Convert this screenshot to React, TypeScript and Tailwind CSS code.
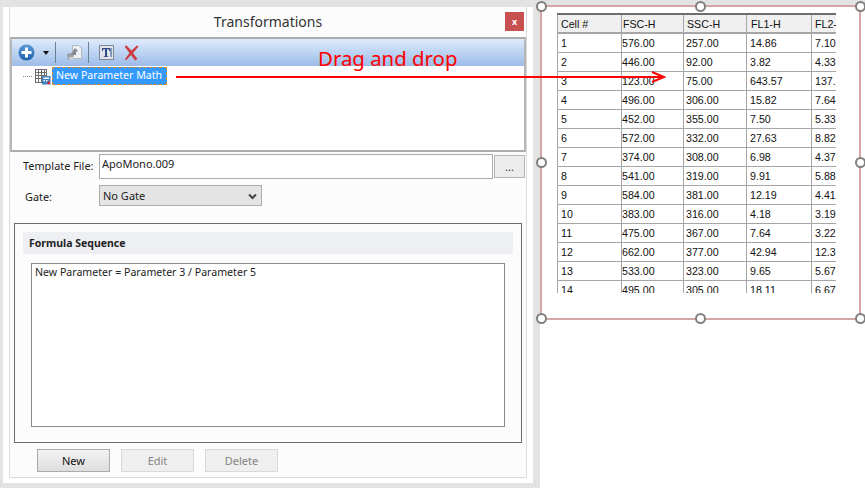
import React from "react";

const ui = { fontFamily: '"Noto Sans", "Open Sans", sans-serif' };
const arial = { fontFamily: '"Liberation Sans", Arial, sans-serif' };

const rows = [
  ["1", "576.00", "257.00", "14.86", "7.10"],
  ["2", "446.00", "92.00", "3.82", "4.33"],
  ["3", "123.00", "75.00", "643.57", "137."],
  ["4", "496.00", "306.00", "15.82", "7.64"],
  ["5", "452.00", "355.00", "7.50", "5.33"],
  ["6", "572.00", "332.00", "27.63", "8.82"],
  ["7", "374.00", "308.00", "6.98", "4.37"],
  ["8", "541.00", "319.00", "9.91", "5.88"],
  ["9", "584.00", "381.00", "12.19", "4.41"],
  ["10", "383.00", "316.00", "4.18", "3.19"],
  ["11", "475.00", "367.00", "7.64", "3.22"],
  ["12", "662.00", "377.00", "42.94", "12.3"],
  ["13", "533.00", "323.00", "9.65", "5.67"],
  ["14", "495.00", "305.00", "18.11", "6.67"],
];

const colClasses = [
  "w-[64px] pl-[3px]",
  "w-[62px] pl-0",
  "w-[63px] pl-[2px]",
  "w-[65px] pl-[3px]",
  "w-[25px] pl-[3px]",
];
const headClasses = [
  "w-[64px] pl-[3px]",
  "w-[62px] pl-[1px]",
  "w-[63px] pl-[3px]",
  "w-[65px] pl-[4px]",
  "w-[25px] pl-[3px]",
];

function Handle({ className }: { className: string }) {
  return (
    <span
      className={`absolute w-[11px] h-[11px] rounded-full bg-white border-2 border-[#808080] ${className}`}
    />
  );
}

function PlusIcon() {
  return (
    <svg width="17" height="17" viewBox="0 0 17 17">
      <defs>
        <linearGradient id="pg" x1="0" y1="0" x2="0" y2="1">
          <stop offset="0" stopColor="#5b9ad6" />
          <stop offset="1" stopColor="#1f62ad" />
        </linearGradient>
      </defs>
      <circle cx="8.5" cy="8.5" r="8" fill="url(#pg)" />
      <rect x="7" y="3.5" width="3" height="10" fill="#fff" />
      <rect x="3.5" y="7" width="10" height="3" fill="#fff" />
    </svg>
  );
}

function ImportIcon() {
  return (
    <svg width="17" height="18" viewBox="0 0 17 18">
      <path d="M6.5 1.5h6l3 3v10h-9z" fill="#eef1f6" stroke="#b4b8bd" />
      <path d="M1 10l4-1 2-1 1 2-1 6H2z" fill="#9a9ea5" />
      <path d="M6 11l1-4 2-3 3 3-2 1v3z" fill="#84898f" />
      <rect x="3" y="13" width="5" height="3" fill="#c9ccd0" />
    </svg>
  );
}

function TextIcon() {
  return (
    <svg width="15" height="15" viewBox="0 0 15 15">
      <rect x="0.5" y="0.5" width="14" height="14" fill="#dfe3ea" stroke="#7f8896" />
      <path d="M3 3h8v3h-1V4.3H8v7h1.2V12H4.8v-.7H6v-7H4V6H3z" fill="#2f4a85" />
      <rect x="11.5" y="3" width="1" height="9" fill="#2f4a85" />
    </svg>
  );
}

function DeleteIcon() {
  return (
    <svg width="15" height="16" viewBox="0 0 15 16">
      <path d="M0.5 1.5L2.5 0.5 7.5 5.5 13 0.5 14.5 1.5 9 8 13.5 14 11 15.5 7 10 2 15.5 1 14 5.5 8z" fill="#cc3c40" />
    </svg>
  );
}

function TableIcon() {
  return (
    <svg width="16" height="16" viewBox="0 0 16 16">
      <rect x="0.5" y="0.5" width="11" height="13" fill="#fff" stroke="#6c6c6c" />
      <path d="M0.5 3.5h11M0.5 6.5h11M0.5 9.5h11M3.5 0.5v13M6.5 0.5v13M9.5 0.5v13" stroke="#6c6c6c" strokeWidth="1" />
      <rect x="7" y="7" width="8.5" height="8.5" fill="#3f83c4" />
      <rect x="8.5" y="8.5" width="5.5" height="1.5" fill="#fff" />
      <rect x="8.5" y="11" width="1.5" height="1.5" fill="#fff" />
      <rect x="11" y="11" width="1.5" height="1.5" fill="#fff" />
      <rect x="12.5" y="12.5" width="2.5" height="2.5" fill="#e02020" />
    </svg>
  );
}

function Button({ label, disabled }: { label: string; disabled?: boolean }) {
  return (
    <button
      className={
        disabled
          ? "w-[73px] h-[23px] pt-[1px] text-[11px] border border-[#d9d9d9] bg-[#efefef] text-[#838383]"
          : "w-[73px] h-[23px] pt-[1px] text-[11px] border border-[#ababab] bg-gradient-to-b from-[#f2f2f2] to-[#dedede] text-[#111]"
      }
    >
      {label}
    </button>
  );
}

export default function App() {
  return (
    <div className="relative w-[865px] h-[488px] overflow-hidden bg-[#e3e3e3] flex text-[#222]" style={ui}>
      {/* Dialog window */}
      <div className="ml-[3px] mt-[7px] w-[530px] h-[476px] bg-white pl-[6px] pr-[6px] pb-[5px] shrink-0">
        <div className="h-full border-x border-b border-[#dcdcdc] bg-[#fcfcfc] flex flex-col">
          <div className="h-[30px] flex items-center shrink-0">
            <div className="w-[37px] shrink-0" />
            <div className="flex-1 text-center text-[14px] text-[#333] leading-none pb-[1px]">Transformations</div>
            <div className="w-[37px] shrink-0 flex pl-[16px] pb-[1px]">
              <div className="w-[19px] h-[19px] bg-[#c75050] text-white text-[9px] font-bold flex items-center justify-center leading-none">
                x
              </div>
            </div>
          </div>

          {/* Toolbar and tree */}
          <div className="h-[115px] border-2 border-[#adadad] border-r-[#b5b5b5] border-l-[#b5b5b5] shrink-0 flex flex-col">
            <div className="h-[27px] shrink-0 bg-gradient-to-b from-[#deebfc] to-[#9dbce8] flex items-center pl-[6px]">
              <PlusIcon />
              <svg width="6" height="4" viewBox="0 0 6 4" className="ml-[8px]">
                <path d="M0 0h6L3 4z" fill="#111" />
              </svg>
              <div className="ml-[6px] w-px h-[21px] bg-[#6f7f92]" />
              <div className="ml-[10px]">
                <ImportIcon />
              </div>
              <div className="ml-[5px] w-px h-[21px] bg-[#6f7f92]" />
              <div className="ml-[10px]">
                <TextIcon />
              </div>
              <div className="ml-[10px]">
                <DeleteIcon />
              </div>
            </div>
            <div className="flex-1 bg-white flex items-start pt-[1px] pl-[11px]">
              <div className="mt-[9px] w-[9px] border-t border-dotted border-[#888]" />
              <div className="ml-[3px] mt-[2px]">
                <TableIcon />
              </div>
              <div className="ml-[1px] w-[115px] h-[18px] bg-[#3399ff] border border-dashed border-[#d98a2b] text-white text-[10.6px] leading-[15px] pl-[3px] whitespace-nowrap">
                New Parameter Math
              </div>
            </div>
          </div>

          {/* Form */}
          <div className="flex items-start h-[31px] mt-[2px] shrink-0">
            <div className="w-[89px] pl-[13px] pt-[4px] text-[10.9px] text-[#222] whitespace-nowrap">Template File:</div>
            <input
              readOnly
              value="ApoMono.009"
              className="w-[394px] h-[25px] border border-[#ababab] bg-white pl-[2px] pb-[7px] text-[11px] text-[#222] outline-none"
              style={ui}
            />
            <div className="ml-[1px] mt-[1px] w-[31px] h-[23px] border border-[#b5b5b5] bg-[#ececec] text-[11px] flex items-center justify-center leading-none text-[#333]">
              ...
            </div>
          </div>
          <div className="flex items-center h-[21px] shrink-0">
            <div className="w-[89px] pl-[15px] pt-[3px] text-[10.9px] text-[#222]">Gate:</div>
            <div className="w-[163px] h-[21px] border border-[#adadad] bg-[#e4e4e4] flex items-center justify-between pl-[3px] pr-[4px] pt-[1px] text-[11px] text-[#222]">
              <span>No Gate</span>
              <svg width="9" height="7" viewBox="0 0 9 7">
                <path d="M1 1.5L4.5 5 8 1.5" fill="none" stroke="#444" strokeWidth="2" />
              </svg>
            </div>
          </div>

          {/* Formula sequence */}
          <div className="ml-[4px] mt-[17px] w-[508px] h-[220px] border border-[#6a6a6a] pt-[8px] px-[8px] shrink-0 flex flex-col">
            <div className="h-[22px] pt-[1px] bg-[#eeeff3] text-[10.5px] font-bold text-[#222] flex items-center pl-[6px] shrink-0">
              Formula Sequence
            </div>
            <div className="ml-[8px] mt-[9px] w-[474px] h-[164px] border border-[#8a8a8a] bg-white pl-[3px] pt-[1px] text-[10.6px] text-[#222] whitespace-nowrap">
              New Parameter = Parameter 3 / Parameter 5
            </div>
          </div>

          <div className="flex gap-[11px] pl-[27px] mt-[6px] shrink-0" style={ui}>
            <Button label="New" />
            <Button label="Edit" disabled />
            <Button label="Delete" disabled />
          </div>
        </div>
      </div>

      {/* Canvas */}
      <div className="ml-[7px] mt-[5px] flex-1 bg-white">
        <div className="relative w-[321px] h-[315px] border-2 border-[#d4a6a6] pl-[15px] pt-[6px]">
          <div className="w-[279px] h-[280px] overflow-hidden" style={arial}>
            <table className="border-collapse table-fixed text-[10.67px] leading-none text-[#111] w-[279px] border-t-2 border-[#6e6e6e]">
              <thead>
                <tr className="h-[19px] bg-[#f0f0f0]">
                  {["Cell #", "FSC-H", "SSC-H", "FL1-H", "FL2-"].map((h, i) => (
                    <th
                      key={h}
                      className={`p-0 pt-[1px] text-left font-normal whitespace-nowrap overflow-hidden border-b-2 border-l border-[#a6a6a6] ${headClasses[i]}`}
                    >
                      {h}
                    </th>
                  ))}
                </tr>
              </thead>
              <tbody>
                {rows.map((r) => (
                  <tr key={r[0]} className="h-[19px]">
                    {r.map((c, i) => (
                      <td
                        key={i}
                        className={`p-0 pt-[1px] whitespace-nowrap overflow-hidden border-b border-l border-[#a6a6a6] ${colClasses[i]}`}
                      >
                        {c}
                      </td>
                    ))}
                  </tr>
                ))}
              </tbody>
            </table>
          </div>
          <Handle className="left-[-6px] top-[-6px]" />
          <Handle className="left-[153px] top-[-6px]" />
          <Handle className="right-[-7px] top-[-6px]" />
          <Handle className="left-[-6px] top-[150px]" />
          <Handle className="right-[-7px] top-[150px]" />
          <Handle className="left-[-6px] bottom-[-6px]" />
          <Handle className="left-[153px] bottom-[-6px]" />
          <Handle className="right-[-7px] bottom-[-6px]" />
        </div>
      </div>

      {/* Annotation over everything */}
      <div className="absolute left-[318px] top-[44px] text-[20.4px] leading-[28px] text-[#ff0000] whitespace-nowrap">
        Drag and drop
      </div>
      <svg className="absolute left-[176px] top-[70px]" width="490" height="14" viewBox="0 0 490 14">
        <path d="M0 7H486" stroke="#ff0000" strokeWidth="2" />
        <path d="M476 2L488 7 476 12" fill="none" stroke="#ff0000" strokeWidth="2" />
      </svg>
    </div>
  );
}
